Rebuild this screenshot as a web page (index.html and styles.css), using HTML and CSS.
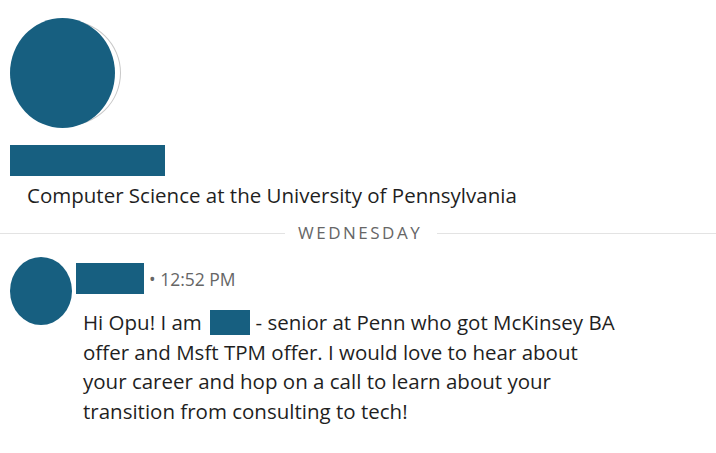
FILE: index.html
```html
<!DOCTYPE html>
<html>
<head>
<meta charset="utf-8">
<link rel="stylesheet" href="styles.css">
</head>
<body>
<div class="profile">
  <div class="avatar-wrap">
    <div class="avatar-ring"></div>
    <div class="avatar-big"></div>
  </div>
  <div class="name-bar"></div>
  <div class="headline">Computer Science at the University of Pennsylvania</div>
</div>
<div class="divider">
  <span class="line"></span>
  <span class="day">WEDNESDAY</span>
  <span class="line"></span>
</div>
<div class="message">
  <div class="avatar-small"></div>
  <div class="msg-body">
    <div class="msg-head"><span class="name-small"></span><span class="time">• 12:52 PM</span></div>
    <p class="msg-text">Hi Opu! I am <span class="redact"></span> - senior at Penn who got McKinsey BA offer and Msft TPM offer. I would love to hear about your career and hop on a call to learn about your transition from consulting to tech!</p>
  </div>
</div>
</body>
</html>
```
FILE: styles.css
```css
* { box-sizing: border-box; }
html, body { margin: 0; background: #fff; }
body {
  font-family: "Open Sans", "Noto Sans", sans-serif;
  color: #1f1f1f;
  width: 716px;
  height: 453px;
  overflow: hidden;
}
.profile { padding: 18px 0 0 10px; }
.avatar-wrap { position: relative; width: 112px; height: 110px; }
.avatar-ring {
  position: absolute; left: 3px; top: 2px; width: 108px; height: 106px;
  border-radius: 50%; border: 1px solid #c8c8c8;
}
.avatar-big {
  position: relative; width: 105px; height: 110px; border-radius: 50%; background: #175f80;
}
.name-bar { width: 155px; height: 31px; background: #175f80; margin-top: 17px; }
.headline {
  font-size: 20.5px; line-height: 26px; margin-top: 6px; padding-left: 17px; letter-spacing: 0;
}
.divider { display: flex; align-items: center; margin-top: 14px; height: 22px; }
.divider .line { height: 1px; background: #e3e3e3; }
.divider .line:first-child { width: 285px; }
.divider .line:last-child { flex: 1; }
.day {
  font-size: 17px; color: #666; letter-spacing: 2.5px; padding: 0 15px 0 13px; line-height: 22px;
}
.message { display: flex; padding: 13px 0 0 10px; }
.avatar-small { width: 62px; height: 68px; border-radius: 50%; background: #175f80; flex: none; }
.msg-body { padding-left: 4px; }
.msg-head { display: flex; align-items: center; margin-top: 6px; }
.name-small { width: 68px; height: 31px; background: #175f80; }
.time { font-size: 17.5px; color: #666; margin-left: 5px; padding-top: 1px; }
.msg-text {
  margin: 14px 0 0 7px; width: 536px; font-size: 20.5px; line-height: 29.5px; letter-spacing: 0;
}
.redact {
  display: inline-block; width: 40px; height: 25px; margin-left: 3px; background: #175f80; vertical-align: -5px;
}
```
